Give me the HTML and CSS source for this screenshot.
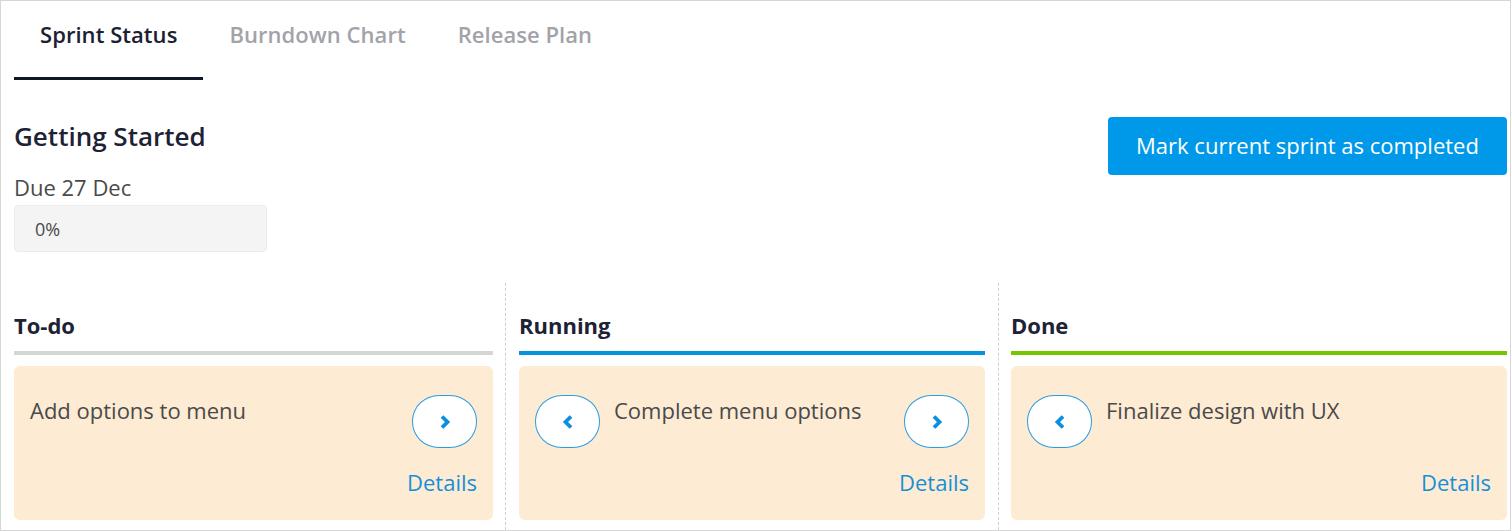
FILE: index.html
```html
<!DOCTYPE html>
<html lang="en">
<head>
<meta charset="utf-8">
<title>Sprint Status</title>
<link rel="stylesheet" href="styles.css">
</head>
<body>
<div class="page">
  <nav class="tabs">
    <a class="tab active">Sprint Status</a>
    <a class="tab">Burndown Chart</a>
    <a class="tab">Release Plan</a>
  </nav>

  <section class="sprint-header">
    <div class="sprint-info">
      <h2 class="sprint-title">Getting Started</h2>
      <div class="sprint-due">Due 27 Dec</div>
      <div class="progress"><span class="progress-label">0%</span></div>
    </div>
    <button class="btn-primary">Mark current sprint as completed</button>
  </section>

  <section class="board">
    <div class="column col-todo">
      <h3 class="column-title">To-do</h3>
      <div class="column-bar bar-gray"></div>
      <div class="card">
        <div class="card-row">
          <span class="card-text">Add options to menu</span>
          <button class="move-btn" aria-label="Move right">
            <svg width="12" height="16" viewBox="0 0 12 16"><path d="M3 2.5 L8.5 8 L3 13.5" /></svg>
          </button>
        </div>
        <a class="details">Details</a>
      </div>
    </div>

    <div class="column col-running">
      <h3 class="column-title">Running</h3>
      <div class="column-bar bar-blue"></div>
      <div class="card">
        <div class="card-row">
          <button class="move-btn" aria-label="Move left">
            <svg width="12" height="16" viewBox="0 0 12 16"><path d="M9 2.5 L3.5 8 L9 13.5" /></svg>
          </button>
          <span class="card-text with-left">Complete menu options</span>
          <button class="move-btn" aria-label="Move right">
            <svg width="12" height="16" viewBox="0 0 12 16"><path d="M3 2.5 L8.5 8 L3 13.5" /></svg>
          </button>
        </div>
        <a class="details">Details</a>
      </div>
    </div>

    <div class="column col-done">
      <h3 class="column-title">Done</h3>
      <div class="column-bar bar-green"></div>
      <div class="card">
        <div class="card-row">
          <button class="move-btn" aria-label="Move left">
            <svg width="12" height="16" viewBox="0 0 12 16"><path d="M9 2.5 L3.5 8 L9 13.5" /></svg>
          </button>
          <span class="card-text with-left">Finalize design with UX</span>
        </div>
        <a class="details">Details</a>
      </div>
    </div>
  </section>
</div>
</body>
</html>
```

FILE: styles.css
```css
* { box-sizing: border-box; }

html, body {
  margin: 0;
  padding: 0;
  background: #ffffff;
}

body {
  font-family: "Open Sans", "Noto Sans", "Liberation Sans", sans-serif;
  color: #4a4a4a;
}

.page {
  width: 1511px;
  height: 531px;
  border: 1px solid #d6d6d6;
  padding: 0 3px 0 13px;
  display: flex;
  flex-direction: column;
  overflow: hidden;
}

/* Tabs */
.tabs {
  display: flex;
}

.tab {
  padding: 18px 26px 28px;
  font-size: 22px;
  line-height: 30px;
  font-weight: 600;
  letter-spacing: 0.05px;
  color: #a2a3a9;
  border-bottom: 3px solid transparent;
  cursor: pointer;
}

.tab.active {
  color: #1b2133;
  border-bottom-color: #0e1628;
}

/* Sprint header */
.sprint-header {
  margin-top: 37px;
  display: flex;
  justify-content: space-between;
  align-items: flex-start;
}

.sprint-title {
  margin: 2px 0 0;
  font-size: 26px;
  line-height: 35px;
  font-weight: 600;
  color: #1d2334;
}

.sprint-due {
  margin-top: 18px;
  font-size: 22px;
  line-height: 30px;
  color: #4a4a4a;
}

.progress {
  margin-top: 3px;
  width: 253px;
  height: 47px;
  background: #f4f4f4;
  border: 1px solid #ececec;
  border-radius: 4px;
  padding-left: 20px;
  display: flex;
  align-items: center;
}

.progress-label {
  font-size: 18px;
  color: #4a4a4a;
}

.btn-primary {
  height: 58px;
  width: 399px;
  padding: 0 0 2px;
  border: none;
  border-radius: 4px;
  background: #0099e9;
  color: #ffffff;
  font-family: inherit;
  font-size: 22px;
  line-height: 30px;
  cursor: pointer;
}

/* Board */
.board {
  margin-top: 31px;
  flex: 1;
  display: grid;
  grid-template-columns: 491px 493px 1fr;
}

.column {
  padding-top: 27px;
}

.col-todo {
  padding-right: 12px;
}

.col-running {
  border-left: 1px dashed #cfcfcf;
  padding-left: 13px;
  padding-right: 13px;
}

.col-done {
  border-left: 1px dashed #cfcfcf;
  padding-left: 12px;
}

.column-title {
  margin: 0 0 11px;
  font-size: 22px;
  line-height: 30px;
  font-weight: 700;
  color: #1d2334;
}

.column-bar {
  height: 4px;
  margin-bottom: 11px;
}

.bar-gray { background: #d6d6d6; }
.bar-blue { background: #0095dc; }
.bar-green { background: #74c600; }

.card {
  height: 154px;
  background: #fdebd3;
  border-radius: 6px;
  padding: 29px 16px 0;
}

.card-row {
  display: flex;
  align-items: flex-start;
}

.card-text {
  flex: 1;
  margin-top: 0;
  font-size: 22px;
  line-height: 30px;
  color: #4a4a4a;
}

.card-text.with-left {
  margin-left: 14px;
}

.move-btn {
  flex: none;
  width: 65px;
  height: 53px;
  padding: 0;
  border: 1px solid #2a9de1;
  border-radius: 27px / 26px;
  background: #ffffff;
  display: flex;
  align-items: center;
  justify-content: center;
  cursor: pointer;
}

.move-btn svg path {
  fill: none;
  stroke: #0b8fe0;
  stroke-width: 3.8;
  stroke-linejoin: miter;
}

.details {
  display: block;
  margin-top: 19px;
  text-align: right;
  font-size: 22px;
  line-height: 30px;
  color: #1590d8;
  cursor: pointer;
}
```
